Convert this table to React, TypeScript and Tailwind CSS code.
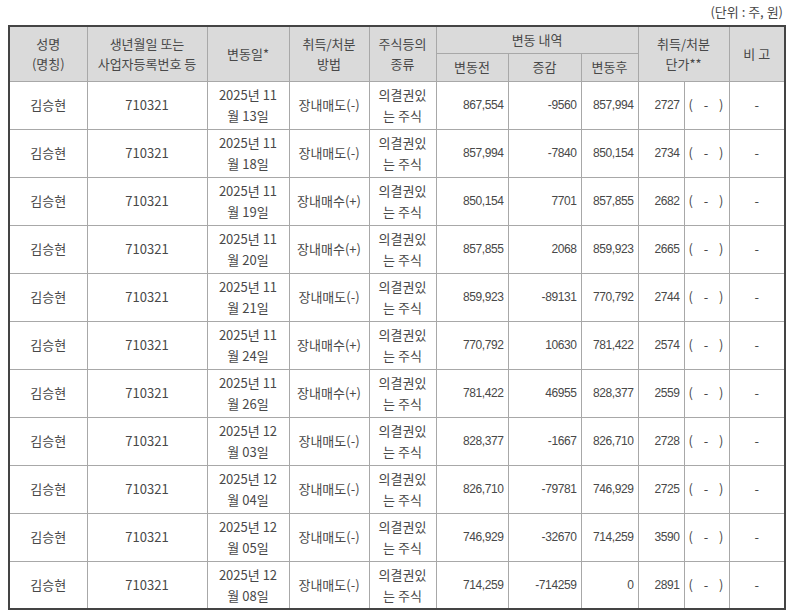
import React from 'react';

type Row = {
  date: [string, string];
  method: string;
  before: string;
  change: string;
  after: string;
  price: string;
};

const rows: Row[] = [
  { date: ['2025년 11', '월 13일'], method: '장내매도(-)', before: '867,554', change: '-9560', after: '857,994', price: '2727' },
  { date: ['2025년 11', '월 18일'], method: '장내매도(-)', before: '857,994', change: '-7840', after: '850,154', price: '2734' },
  { date: ['2025년 11', '월 19일'], method: '장내매수(+)', before: '850,154', change: '7701', after: '857,855', price: '2682' },
  { date: ['2025년 11', '월 20일'], method: '장내매수(+)', before: '857,855', change: '2068', after: '859,923', price: '2665' },
  { date: ['2025년 11', '월 21일'], method: '장내매도(-)', before: '859,923', change: '-89131', after: '770,792', price: '2744' },
  { date: ['2025년 11', '월 24일'], method: '장내매수(+)', before: '770,792', change: '10630', after: '781,422', price: '2574' },
  { date: ['2025년 11', '월 26일'], method: '장내매수(+)', before: '781,422', change: '46955', after: '828,377', price: '2559' },
  { date: ['2025년 12', '월 03일'], method: '장내매도(-)', before: '828,377', change: '-1667', after: '826,710', price: '2728' },
  { date: ['2025년 12', '월 04일'], method: '장내매도(-)', before: '826,710', change: '-79781', after: '746,929', price: '2725' },
  { date: ['2025년 12', '월 05일'], method: '장내매도(-)', before: '746,929', change: '-32670', after: '714,259', price: '3590' },
  { date: ['2025년 12', '월 08일'], method: '장내매도(-)', before: '714,259', change: '-714259', after: '0', price: '2891' },
];

const th = 'border border-[#a8a8a8] bg-[#dadada] font-normal text-center align-middle leading-[20px] p-0';
const td = 'border border-[#a8a8a8] text-center align-middle p-0';
const num = 'border border-[#a8a8a8] text-right align-middle pr-[4px] text-[12px] tracking-[-0.4px] font-["Liberation_Sans","Noto_Sans_CJK_KR",sans-serif]';

const App: React.FC = () => {
  return (
    <div className='w-[800px] h-[613px] bg-white pl-[8px] pr-[16px] text-[13px] text-[#484848] font-["Noto_Sans_CJK_KR",sans-serif] overflow-hidden'>
      {/* unit caption */}
      <div className="h-[25px] pt-[2px] text-right leading-[20px] pr-[1px]">(단위 : 주, 원)</div>

      <table className="table-fixed border-collapse border-2 border-[#444] w-[776px]">
        <colgroup>
          <col className="w-[78px]" />
          <col className="w-[120px]" />
          <col className="w-[82px]" />
          <col className="w-[80px]" />
          <col className="w-[67px]" />
          <col className="w-[72px]" />
          <col className="w-[73px]" />
          <col className="w-[57px]" />
          <col className="w-[46px]" />
          <col className="w-[45px]" />
          <col className="w-[56px]" />
        </colgroup>
        <thead>
          <tr className="h-[27px]">
            <th rowSpan={2} className={th}>성명<br />(명칭)</th>
            <th rowSpan={2} className={th}>생년월일 또는<br />사업자등록번호 등</th>
            <th rowSpan={2} className={th}>변동일*</th>
            <th rowSpan={2} className={th}>취득/처분<br />방법</th>
            <th rowSpan={2} className={th}>주식등의<br />종류</th>
            <th colSpan={3} className={th}>변동 내역</th>
            <th rowSpan={2} colSpan={2} className={th}>취득/처분<br />단가**</th>
            <th rowSpan={2} className={th}>비 고</th>
          </tr>
          <tr className="h-[28px]">
            <th className={th}>변동전</th>
            <th className={th}>증감</th>
            <th className={th}>변동후</th>
          </tr>
        </thead>
        <tbody>
          {rows.map((r, i) => (
            <tr key={i} className="h-[48px]">
              <td className={td}>김승현</td>
              <td className={td}>710321</td>
              <td className={`${td} leading-[21px]`}>{r.date[0]}<br />{r.date[1]}</td>
              <td className={td}>{r.method}</td>
              <td className={`${td} leading-[21px]`}>의결권있<br />는 주식</td>
              <td className={num}>{r.before}</td>
              <td className={num}>{r.change}</td>
              <td className={num}>{r.after}</td>
              <td className={num}>{r.price}</td>
              <td className={td}>
                <div className="flex justify-between pl-[4px] pr-[5px]">
                  <span>(</span>
                  <span>-</span>
                  <span>)</span>
                </div>
              </td>
              <td className={td}>-</td>
            </tr>
          ))}
        </tbody>
      </table>
    </div>
  );
};

export default App;
